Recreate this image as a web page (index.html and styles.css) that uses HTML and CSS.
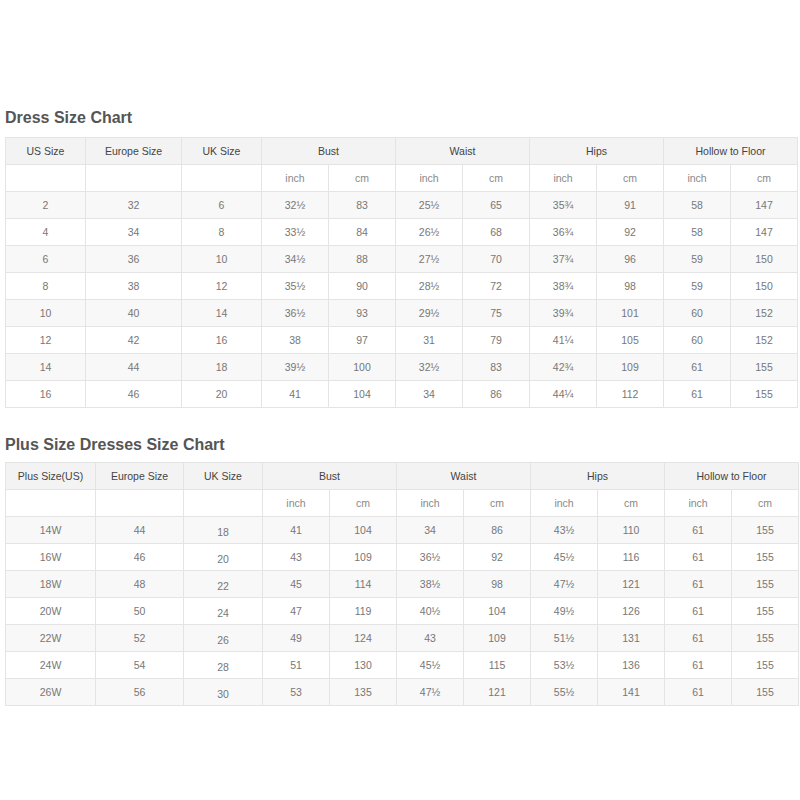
FILE: index.html
```html
<!DOCTYPE html>
<html>
<head>
<meta charset="utf-8">
<link rel="stylesheet" href="styles.css">
</head>
<body>
<div class="page">
  <h2 class="title first">Dress Size Chart</h2>
  <table class="chart chart-a">
    <colgroup>
      <col class="c80"><col class="c96"><col class="c80">
      <col class="c67"><col class="c67"><col class="c67"><col class="c67"><col class="c67"><col class="c67"><col class="c67"><col class="c67">
    </colgroup>
    <thead>
      <tr class="head"><th>US Size</th><th>Europe Size</th><th>UK Size</th><th colspan="2">Bust</th><th colspan="2">Waist</th><th colspan="2">Hips</th><th colspan="2">Hollow to Floor</th></tr>
      <tr class="units"><td></td><td></td><td></td><td>inch</td><td>cm</td><td>inch</td><td>cm</td><td>inch</td><td>cm</td><td>inch</td><td>cm</td></tr>
    </thead>
    <tbody>
      <tr><td>2</td><td>32</td><td>6</td><td>32½</td><td>83</td><td>25½</td><td>65</td><td>35¾</td><td>91</td><td>58</td><td>147</td></tr>
      <tr><td>4</td><td>34</td><td>8</td><td>33½</td><td>84</td><td>26½</td><td>68</td><td>36¾</td><td>92</td><td>58</td><td>147</td></tr>
      <tr><td>6</td><td>36</td><td>10</td><td>34½</td><td>88</td><td>27½</td><td>70</td><td>37¾</td><td>96</td><td>59</td><td>150</td></tr>
      <tr><td>8</td><td>38</td><td>12</td><td>35½</td><td>90</td><td>28½</td><td>72</td><td>38¾</td><td>98</td><td>59</td><td>150</td></tr>
      <tr><td>10</td><td>40</td><td>14</td><td>36½</td><td>93</td><td>29½</td><td>75</td><td>39¾</td><td>101</td><td>60</td><td>152</td></tr>
      <tr><td>12</td><td>42</td><td>16</td><td>38</td><td>97</td><td>31</td><td>79</td><td>41¼</td><td>105</td><td>60</td><td>152</td></tr>
      <tr><td>14</td><td>44</td><td>18</td><td>39½</td><td>100</td><td>32½</td><td>83</td><td>42¾</td><td>109</td><td>61</td><td>155</td></tr>
      <tr><td>16</td><td>46</td><td>20</td><td>41</td><td>104</td><td>34</td><td>86</td><td>44¼</td><td>112</td><td>61</td><td>155</td></tr>
    </tbody>
  </table>

  <h2 class="title second">Plus Size Dresses Size Chart</h2>
  <table class="chart chart-b">
    <colgroup>
      <col class="c90"><col class="c88"><col class="c79">
      <col class="c67"><col class="c67"><col class="c67"><col class="c67"><col class="c67"><col class="c67"><col class="c67"><col class="c67">
    </colgroup>
    <thead>
      <tr class="head"><th>Plus Size(US)</th><th>Europe Size</th><th>UK Size</th><th colspan="2">Bust</th><th colspan="2">Waist</th><th colspan="2">Hips</th><th colspan="2">Hollow to Floor</th></tr>
      <tr class="units"><td></td><td></td><td></td><td>inch</td><td>cm</td><td>inch</td><td>cm</td><td>inch</td><td>cm</td><td>inch</td><td>cm</td></tr>
    </thead>
    <tbody>
      <tr><td>14W</td><td>44</td><td class="low">18</td><td>41</td><td>104</td><td>34</td><td>86</td><td>43½</td><td>110</td><td>61</td><td>155</td></tr>
      <tr><td>16W</td><td>46</td><td class="low">20</td><td>43</td><td>109</td><td>36½</td><td>92</td><td>45½</td><td>116</td><td>61</td><td>155</td></tr>
      <tr><td>18W</td><td>48</td><td class="low">22</td><td>45</td><td>114</td><td>38½</td><td>98</td><td>47½</td><td>121</td><td>61</td><td>155</td></tr>
      <tr><td>20W</td><td>50</td><td class="low">24</td><td>47</td><td>119</td><td>40½</td><td>104</td><td>49½</td><td>126</td><td>61</td><td>155</td></tr>
      <tr><td>22W</td><td>52</td><td class="low">26</td><td>49</td><td>124</td><td>43</td><td>109</td><td>51½</td><td>131</td><td>61</td><td>155</td></tr>
      <tr><td>24W</td><td>54</td><td class="low">28</td><td>51</td><td>130</td><td>45½</td><td>115</td><td>53½</td><td>136</td><td>61</td><td>155</td></tr>
      <tr><td>26W</td><td>56</td><td class="low">30</td><td>53</td><td>135</td><td>47½</td><td>121</td><td>55½</td><td>141</td><td>61</td><td>155</td></tr>
    </tbody>
  </table>
</div>
</body>
</html>
```

FILE: styles.css
```css
html, body {
  margin: 0;
  padding: 0;
  background: #ffffff;
}

.page {
  padding: 108px 0 0 5px;
  font-family: "Liberation Sans", Arial, sans-serif;
}

.title {
  margin: 0;
  font-size: 16px;
  line-height: 20px;
  font-weight: bold;
  color: #555555;
}

.title.first {
  margin-bottom: 9px;
}

.title.second {
  margin-top: 27px;
  margin-bottom: 7px;
}

.chart {
  border-collapse: collapse;
  table-layout: fixed;
  font-size: 10.5px;
  color: #777777;
}

.chart-a { width: 792px; }
.chart-b { width: 793px; }

.c80 { width: 80px; }
.c96 { width: 96px; }
.c67 { width: 67px; }
.c90 { width: 90px; }
.c88 { width: 88px; }
.c79 { width: 79px; }

.chart th,
.chart td {
  border: 1px solid #e4e4e4;
  height: 26px;
  padding: 0;
  text-align: center;
  vertical-align: middle;
  font-weight: normal;
  line-height: 12px;
  white-space: nowrap;
}

.chart .head th {
  background: #f3f3f3;
  color: #444444;
}

.chart .units td {
  background: #ffffff;
  color: #888888;
}

.chart tbody tr:nth-child(odd) td {
  background: #f8f8f8;
}

.chart tbody tr:nth-child(even) td {
  background: #ffffff;
}

.chart td.low {
  padding-top: 4px;
  height: 22px;
}
```
